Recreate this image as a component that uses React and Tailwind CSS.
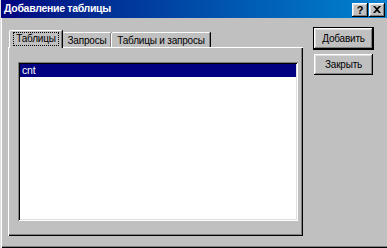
import React from 'react';

const raised =
  'bg-[#c0c0c0] shadow-[inset_-1px_-1px_#000,inset_1px_1px_#fff,inset_-2px_-2px_#808080,inset_2px_2px_#dfdfdf]';

const TitleButton = ({ children }) => (
  <div className={`w-[16px] h-[14px] flex items-center justify-center ${raised}`}>{children}</div>
);

const Tab = ({ label, active, width }) => (
  <div
    className={`relative shrink-0 flex items-center justify-center whitespace-nowrap bg-[#c0c0c0] border-t border-l border-white rounded-tl-[2px] rounded-tr-[1px] shadow-[inset_-1px_0_#808080,1px_0_#000] ${
      active ? 'h-[18px] top-[1px] z-10 pb-[2px]' : 'h-[15px]'
    }`}
    style={{ width }}
  >
    {active ? (
      <span className="border border-dotted border-black px-[2px] leading-[11px] pb-[1px]">{label}</span>
    ) : (
      <span className="leading-[11px]">{label}</span>
    )}
  </div>
);

const Button = ({ children, isDefault }) => (
  <div className={isDefault ? 'border border-black' : 'p-[1px]'}>
    <div className={`w-[59px] h-[21px] flex items-center justify-center ${raised}`}>{children}</div>
  </div>
);

export default function App() {
  return (
    <div className="w-[387px] h-[248px] bg-[#c0c0c0] overflow-hidden text-[10px] tracking-[-0.2px] text-black font-['Liberation_Sans',Arial,sans-serif] shadow-[inset_1px_0_#dfdfdf,inset_2px_0_#fff,inset_0_-1px_#000,inset_0_-2px_#808080]">
      {/* title bar */}
      <div className="ml-[1px] h-[18px] flex items-center justify-between pl-[3px] pr-[2px] bg-gradient-to-r from-[#000080] to-[#1084d0]">
        <span className="text-white font-bold text-[10.5px] tracking-[-0.3px]">Добавление таблицы</span>
        <div className="flex gap-[1px] mt-[1px]">
          <TitleButton>
            <span className="font-bold text-[11px] leading-none pt-[1px]">?</span>
          </TitleButton>
          <TitleButton>
            <svg width="8" height="7" viewBox="0 0 8 7">
              <path d="M0 0h2l2 2 2-2h2L5 3.5 8 7H6L4 5 2 7H0l3-3.5z" fill="#000" />
            </svg>
          </TitleButton>
        </div>
      </div>

      <div className="flex pl-[8px]">
        {/* tab control */}
        <div className="mt-[12px] w-[295px] shrink-0">
          <div className="flex items-end h-[17px] pl-[1px]">
            <Tab label="Таблицы" active width={53} />
            <Tab label="Запросы" width={49} />
            <Tab label="Таблицы и запросы" width={99} />
          </div>
          <div className="h-[189px] pt-[14px] pl-[9px] bg-[#c0c0c0] border-t border-l border-white shadow-[inset_-1px_-1px_#000,inset_-2px_-2px_#808080]">
            <div className="w-[280px] h-[159px] p-[2px] bg-white shadow-[inset_1px_1px_#808080,inset_-1px_-1px_#fff,inset_2px_2px_#000,inset_-2px_-2px_#dfdfdf]">
              <div className="h-[13px] bg-[#000080] text-white pl-[2px] leading-[13px] text-[10.5px]">cnt</div>
            </div>
          </div>
        </div>

        {/* buttons */}
        <div className="ml-[10px] mt-[9px] flex flex-col gap-[3px]">
          <Button isDefault>
            <span>
              <span className="underline">Д</span>обавить
            </span>
          </Button>
          <Button>Закрыть</Button>
        </div>
      </div>
    </div>
  );
}
